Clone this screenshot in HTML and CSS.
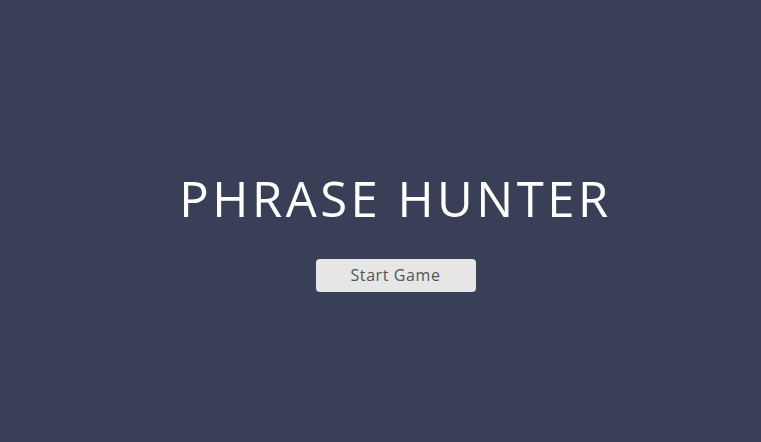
FILE: index.html
```html
<!DOCTYPE html>
<html lang="en">
<head>
    <meta charset="UTF-8">
    <meta name="viewport" content="width=device-width, initial-scale=1.0">
    <title>Phrase Hunter</title>
    <link rel="stylesheet" href="styles.css">
</head>
<body>

    <div id="overlay" class="start">
        <h2 class="title">PHRASE HUNTER</h2>
        <button id="btn__reset">Start Game</button>
    </div>

</body>
</html>
```

FILE: styles.css
```css
html, body {
    height: 100%;
}

body {
    margin: 0;
    background-color: #3a3f58;
    font-family: "Open Sans", Arial, sans-serif;
}

#overlay {
    height: 100%;
    display: flex;
    flex-direction: column;
    align-items: center;
    justify-content: center;
    padding-left: 30px;
    padding-top: 14px;
    box-sizing: border-box;
}

.title {
    color: #fff;
    font-size: 49px;
    font-weight: 500;
    margin: 0 0 28px;
    letter-spacing: 3.5px;
}

#btn__reset {
    width: 160px;
    height: 33px;
    border: none;
    border-radius: 4px;
    background-color: #e6e6e6;
    color: #555;
    font-family: "Open Sans", Arial, sans-serif;
    font-size: 16px;
    letter-spacing: 0.6px;
    cursor: pointer;
}
```
